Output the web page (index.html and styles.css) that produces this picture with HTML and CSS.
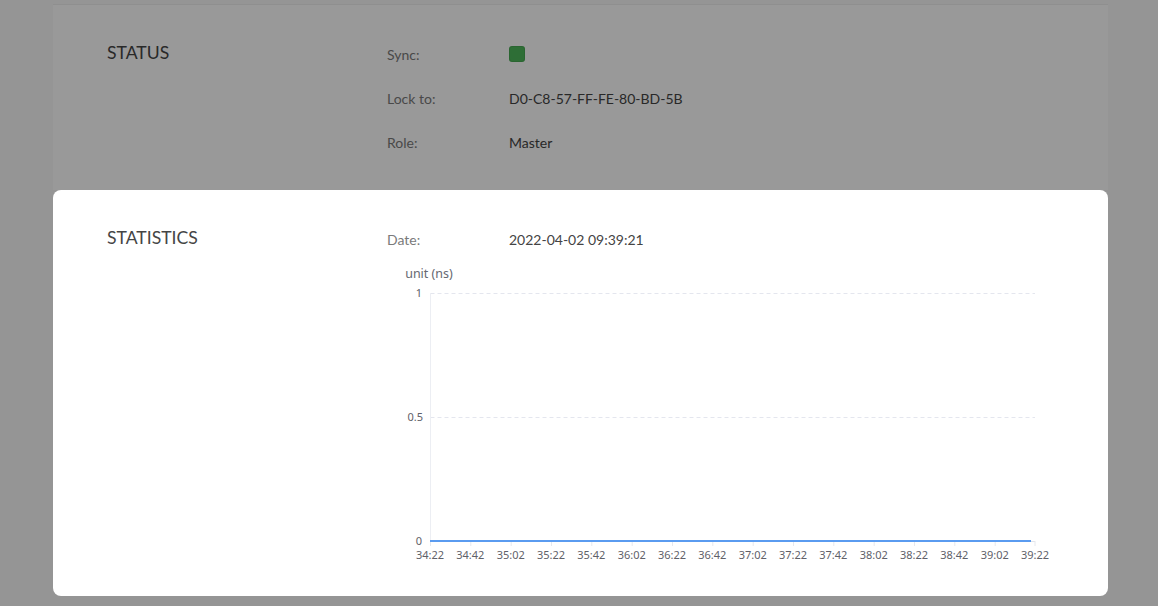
FILE: index.html
```html
<!DOCTYPE html>
<html lang="en">
<head>
<meta charset="utf-8">
<title>PTP Status</title>
<link rel="stylesheet" href="styles.css">
</head>
<body>
<main class="page">
  <section class="panel panel-status">
    <h2 class="panel-title">STATUS</h2>
    <div class="fields">
      <div class="row"><span class="label">Sync:</span><span class="value"><span class="led"></span></span></div>
      <div class="row"><span class="label">Lock to:</span><span class="value">D0-C8-57-FF-FE-80-BD-5B</span></div>
      <div class="row"><span class="label">Role:</span><span class="value">Master</span></div>
    </div>
  </section>

  <div class="overlay"></div>

  <section class="panel panel-stats">
    <h2 class="panel-title">STATISTICS</h2>
    <div class="fields stats-fields">
      <div class="row row-date"><span class="label">Date:</span><span class="value">2022-04-02 09:39:21</span></div>
      <svg class="chart" width="680" height="310" viewBox="0 0 680 310">
        <text class="unit" x="42" y="18" text-anchor="middle">unit (ns)</text>
        <g class="grid">
          <line x1="43.5" y1="33.5" x2="648" y2="33.5"/>
          <line x1="43.5" y1="157.5" x2="648" y2="157.5"/>
        </g>
        <line class="yaxis" x1="43.5" y1="33" x2="43.5" y2="281"/>
        <line class="xaxis" x1="43" y1="281.5" x2="648" y2="281.5"/>
        <g class="ticks">
          <line x1="43.5" y1="281" x2="43.5" y2="286"/>
          <line x1="83.8" y1="281" x2="83.8" y2="286"/>
          <line x1="124.2" y1="281" x2="124.2" y2="286"/>
          <line x1="164.5" y1="281" x2="164.5" y2="286"/>
          <line x1="204.8" y1="281" x2="204.8" y2="286"/>
          <line x1="245.2" y1="281" x2="245.2" y2="286"/>
          <line x1="285.5" y1="281" x2="285.5" y2="286"/>
          <line x1="325.8" y1="281" x2="325.8" y2="286"/>
          <line x1="366.2" y1="281" x2="366.2" y2="286"/>
          <line x1="406.5" y1="281" x2="406.5" y2="286"/>
          <line x1="446.8" y1="281" x2="446.8" y2="286"/>
          <line x1="487.2" y1="281" x2="487.2" y2="286"/>
          <line x1="527.5" y1="281" x2="527.5" y2="286"/>
          <line x1="567.8" y1="281" x2="567.8" y2="286"/>
          <line x1="608.2" y1="281" x2="608.2" y2="286"/>
          <line x1="648" y1="281" x2="648" y2="286"/>
        </g>
        <line class="series" x1="43" y1="281" x2="644" y2="281"/>
        <g class="ylabels" text-anchor="end">
          <text x="35" y="37">1</text>
          <text x="36" y="161">0.5</text>
          <text x="35" y="285">0</text>
        </g>
        <g class="xlabels" text-anchor="middle">
          <text x="43" y="299">34:22</text>
          <text x="83.3" y="299">34:42</text>
          <text x="123.7" y="299">35:02</text>
          <text x="164" y="299">35:22</text>
          <text x="204.3" y="299">35:42</text>
          <text x="244.7" y="299">36:02</text>
          <text x="285" y="299">36:22</text>
          <text x="325.3" y="299">36:42</text>
          <text x="365.7" y="299">37:02</text>
          <text x="406" y="299">37:22</text>
          <text x="446.3" y="299">37:42</text>
          <text x="486.7" y="299">38:02</text>
          <text x="527" y="299">38:22</text>
          <text x="567.3" y="299">38:42</text>
          <text x="607.7" y="299">39:02</text>
          <text x="648" y="299">39:22</text>
        </g>
      </svg>
    </div>
  </section>
</main>
</body>
</html>
```

FILE: styles.css
```css
html, body {
  margin: 0;
  padding: 0;
}

body {
  background: #f8f8f8;
  font-family: Lato, "Noto Sans", "Liberation Sans", sans-serif;
  color: #333333;
  height: 606px;
  overflow: hidden;
}

.page {
  width: 1055px;
  margin-left: 53px;
  padding-top: 4px;
}

.panel {
  display: flex;
  background: #ffffff;
  padding-left: 54px;
}

.panel-status {
  border-top: 1px solid #eeeeee;
  padding-top: 27px;
  padding-bottom: 26px;
}

.panel-title {
  width: 280px;
  flex: none;
  margin: 10px 0 0 0;
  font-size: 17.6px;
  line-height: 22px;
  font-weight: 400;
  color: #454545;
}

.fields {
  display: flex;
  flex-direction: column;
}

.row {
  display: flex;
  align-items: center;
  height: 44px;
  font-size: 14px;
}

.label {
  width: 122px;
  flex: none;
  color: #7a7a7a;
}

.value {
  color: #444444;
  display: flex;
  align-items: center;
}

.led {
  display: inline-block;
  width: 16px;
  height: 16px;
  border-radius: 3px;
  background: #4db85a;
  box-shadow: inset 0 0 0 1px rgba(0, 0, 0, 0.08);
}

.overlay {
  position: fixed;
  inset: 0;
  background: rgba(0, 0, 0, 0.4);
  z-index: 1;
}

.panel-stats {
  position: relative;
  z-index: 2;
  border-radius: 8px;
  padding-top: 38px;
  padding-bottom: 26px;
}

.panel-stats .panel-title {
  margin-top: -1px;
}

.stats-fields {
  padding-top: 2px;
}

.row-date {
  height: 20px;
  line-height: 20px;
}

.row-date .value {
  color: #444444;
}

.chart {
  display: block;
  margin-top: 10px;
  font-family: "Noto Sans", "Open Sans", "Liberation Sans", sans-serif;
}

.chart .unit {
  font-size: 12.5px;
  fill: #666870;
}

.chart .grid line {
  stroke: #e4e6ee;
  stroke-width: 1;
  stroke-dasharray: 4 3;
}

.chart .yaxis {
  stroke: #eceef3;
  stroke-width: 1;
}

.chart .xaxis {
  stroke: #e0e3ea;
  stroke-width: 1;
}

.chart .ticks line {
  stroke: #e6e8ee;
  stroke-width: 1;
}

.chart .series {
  stroke: #5a9bf0;
  stroke-width: 2;
}

.chart .ylabels text,
.chart .xlabels text {
  font-size: 11px;
  fill: #5f6169;
}
```
